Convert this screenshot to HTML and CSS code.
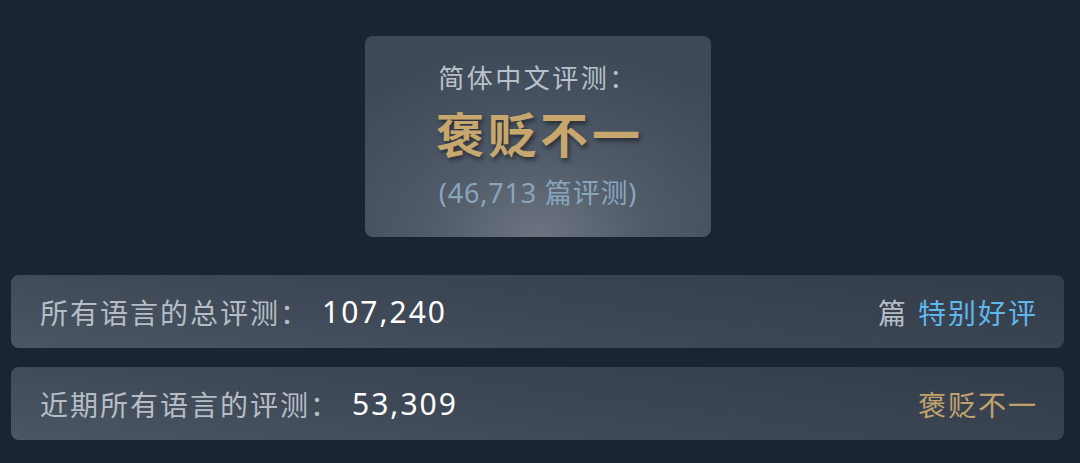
FILE: index.html
```html
<!DOCTYPE html>
<html lang="zh-CN">
<head>
    <meta charset="UTF-8">
    <meta name="viewport" content="width=device-width, initial-scale=1.0">
    <title>用户评测</title>
    <link rel="stylesheet" href="styles.css">
</head>
<body>
    <div class="summary">
        <div class="summary-title">简体中文评测：</div>
        <div class="summary-rating">褒贬不一</div>
        <div class="summary-count">(46,713 篇评测)</div>
    </div>

    <div class="rows">
        <div class="row">
            <div class="row-left">
                <span class="row-label">所有语言的总评测：</span>
                <span class="row-num">107,240</span>
            </div>
            <div class="row-right">
                <span class="unit">篇</span>
                <span class="positive">特别好评</span>
            </div>
        </div>
        <div class="row">
            <div class="row-left">
                <span class="row-label">近期所有语言的评测：</span>
                <span class="row-num">53,309</span>
            </div>
            <div class="row-right">
                <span class="mixed">褒贬不一</span>
            </div>
        </div>
    </div>
</body>
</html>
```

FILE: styles.css
```css
body {
    margin: 0;
    padding: 36px 16px 0 11px;
    background: #1b2433;
    font-family: "Noto Sans", "Noto Sans CJK SC", sans-serif;
    color: #b6bdc6;
}
.summary {
    width: 346px;
    height: 201px;
    box-sizing: border-box;
    margin: 0 0 0 354px;
    padding-top: 27px;
    border-radius: 8px;
    background: radial-gradient(ellipse 75% 95% at 50% 100%, #6c7480 0%, #4f5967 45%, #3e4958 100%);
    text-align: center;
}
.summary-title {
    font-size: 26px;
    line-height: 30px;
    letter-spacing: 2.5px;
    color: #b9c1ca;
}
.summary-rating {
    margin-top: 12px;
    padding-left: 4px;
    font-size: 48px;
    line-height: 60px;
    font-weight: 700;
    letter-spacing: 4px;
    color: #c8a76f;
    text-shadow: 2px 3px 4px rgba(0, 0, 0, 0.45);
}
.summary-count {
    margin-top: 13px;
    font-size: 27px;
    line-height: 30px;
    letter-spacing: 0.8px;
    color: #89a4bd;
}
.rows {
    margin-top: 38px;
    display: flex;
    flex-direction: column;
    gap: 19px;
}
.row {
    height: 73px;
    display: flex;
    align-items: center;
    justify-content: space-between;
    padding: 0 26px 0 29px;
    border-radius: 8px;
    background: linear-gradient(8deg, #4b5663 0%, #3d4755 45%, #333d4a 100%);
}
.row-left, .row-right {
    display: flex;
    align-items: center;
}
.row-label {
    font-size: 28px;
    letter-spacing: 2px;
    color: #b6bdc6;
}
.row-num {
    margin-left: 12px;
    font-size: 30px;
    letter-spacing: 2px;
    color: #ffffff;
}
.row-right span {
    font-size: 28px;
    letter-spacing: 2px;
}
.unit {
    margin-right: 10px;
    color: #b6bdc6;
}
.positive {
    color: #62b7ea;
}
.mixed {
    color: #c0a26e;
}
```
